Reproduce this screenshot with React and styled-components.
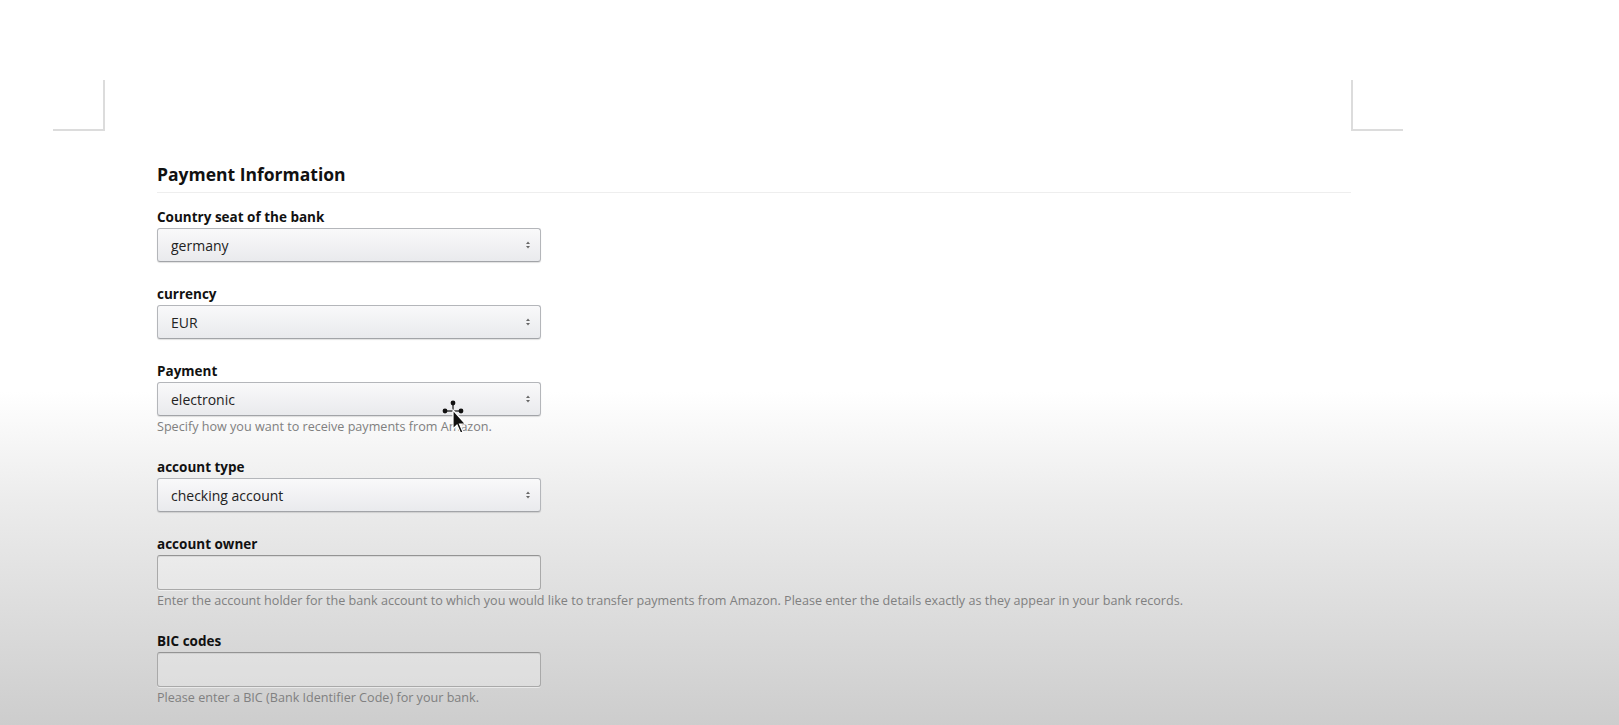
import styled, { createGlobalStyle } from "styled-components";

const GlobalStyle = createGlobalStyle`
  html, body {
    margin: 0;
    padding: 0;
  }
  body {
    font-family: "Open Sans", "DejaVu Sans", sans-serif;
    color: #111;
  }
`;

function Arrows() {
  return (
    <ArrowIcon width="6" height="10" viewBox="0 0 6 10">
      <path d="M1 4 L3 1.5 L5 4 Z" fill="#666" />
      <path d="M1 6 L3 8.5 L5 6 Z" fill="#666" />
    </ArrowIcon>
  );
}

function MoveCursor() {
  return (
    <CursorIcon width="30" height="40" viewBox="0 0 30 40">
      <circle cx="11" cy="3" r="2.4" fill="#111" />
      <circle cx="3" cy="11" r="2.4" fill="#111" />
      <circle cx="19" cy="11" r="2.4" fill="#111" />
      <line x1="11" y1="4" x2="11" y2="11" stroke="#111" strokeWidth="1.2" />
      <line x1="4" y1="11" x2="18" y2="11" stroke="#111" strokeWidth="1.2" />
      <path d="M11 10 L11 29 L15 25 L18.5 33 L21 32 L17.5 24 L23.5 24 Z" fill="#111" stroke="#fff" strokeWidth="1.2" />
    </CursorIcon>
  );
}

function SelectField({ label, value, help, cursor }) {
  return (
    <Field>
      <Label>{label}</Label>
      <SelectWrap>
        <Select defaultValue={value}>
          <option>{value}</option>
        </Select>
        <Arrows />
        {cursor && <MoveCursor />}
      </SelectWrap>
      {help && <Help>{help}</Help>}
    </Field>
  );
}

function TextField({ label, help }) {
  return (
    <Field>
      <Label>{label}</Label>
      <Input type="text" />
      {help && <Help>{help}</Help>}
    </Field>
  );
}

export default function App() {
  return (
    <Page>
      <GlobalStyle />
      <Frame>
        <Corners>
          <CornerMark side="left" />
          <CornerMark side="right" />
        </Corners>
        <Content>
          <Title>Payment Information</Title>
          <Divider />
          <Form>
            <SelectField label="Country seat of the bank" value="germany" />
            <SelectField label="currency" value="EUR" />
            <SelectField
              label="Payment"
              value="electronic"
              help="Specify how you want to receive payments from Amazon."
              cursor
            />
            <SelectField label="account type" value="checking account" />
            <TextField
              label="account owner"
              help="Enter the account holder for the bank account to which you would like to transfer payments from Amazon. Please enter the details exactly as they appear in your bank records."
            />
            <TextField
              label="BIC codes"
              help="Please enter a BIC (Bank Identifier Code) for your bank."
            />
          </Form>
        </Content>
      </Frame>
    </Page>
  );
}

const Page = styled.div`
  min-height: 100vh;
  height: 725px;
  overflow: hidden;
  box-sizing: border-box;
  padding: 80px 0 0 53px;
  background: linear-gradient(
    to bottom,
    #ffffff 0%,
    #ffffff 54%,
    #ececec 69%,
    #dedede 83%,
    #cdcdcd 100%
  );
`;

const Frame = styled.div`
  width: 1350px;
`;

const Corners = styled.div`
  display: flex;
  justify-content: space-between;
`;

const CornerMark = styled.div`
  width: 52px;
  height: 51px;
  box-sizing: border-box;
  border-bottom: 2px solid #dcdcdc;
  ${(p) =>
    p.side === "left"
      ? "border-right: 2px solid #dcdcdc;"
      : "border-left: 2px solid #dcdcdc;"}
`;

const Content = styled.div`
  padding-left: 104px;
  padding-right: 52px;
`;

const Title = styled.h2`
  margin: 32px 0 0;
  font-size: 17.5px;
  line-height: 22px;
  font-weight: 700;
  color: #111;
`;

const Divider = styled.div`
  margin-top: 7px;
  height: 1px;
  background: #eeeeee;
`;

const Form = styled.div`
  display: flex;
  flex-direction: column;
  gap: 24px;
  margin-top: 16px;
`;

const Field = styled.div`
  display: flex;
  flex-direction: column;
`;

const Label = styled.label`
  font-size: 13.5px;
  line-height: 17px;
  font-weight: 700;
  color: #111;
  margin-bottom: 2px;
`;

const SelectWrap = styled.div`
  position: relative;
  width: 384px;
  height: 34px;
`;

const Select = styled.select`
  appearance: none;
  width: 100%;
  height: 100%;
  box-sizing: border-box;
  padding: 0 24px 0 13px;
  font-family: "Open Sans", "DejaVu Sans", sans-serif;
  font-size: 14px;
  color: #222;
  border: 1px solid #b4b6ba;
  border-bottom-color: #a2a4a8;
  border-radius: 3px;
  background: linear-gradient(to bottom, #f9f9fa, #e9eaed);
  box-shadow: 0 1px 1px rgba(0, 0, 0, 0.12);
  outline: none;
`;

const ArrowIcon = styled.svg`
  position: absolute;
  right: 10px;
  top: 12px;
  pointer-events: none;
`;

const CursorIcon = styled.svg`
  position: absolute;
  left: 285px;
  top: 18px;
  pointer-events: none;
`;

const Input = styled.input`
  width: 384px;
  height: 35px;
  box-sizing: border-box;
  border: 1px solid #a9a9a9;
  border-top-color: #949494;
  border-radius: 3px;
  background: rgba(255, 255, 255, 0.25);
  box-shadow: inset 0 1px 0 rgba(0, 0, 0, 0.07), 0 1px 0 rgba(255, 255, 255, 0.5);
  outline: none;
`;

const Help = styled.div`
  margin-top: 3px;
  font-size: 12.6px;
  line-height: 16px;
  color: #808080;
  white-space: nowrap;
`;
